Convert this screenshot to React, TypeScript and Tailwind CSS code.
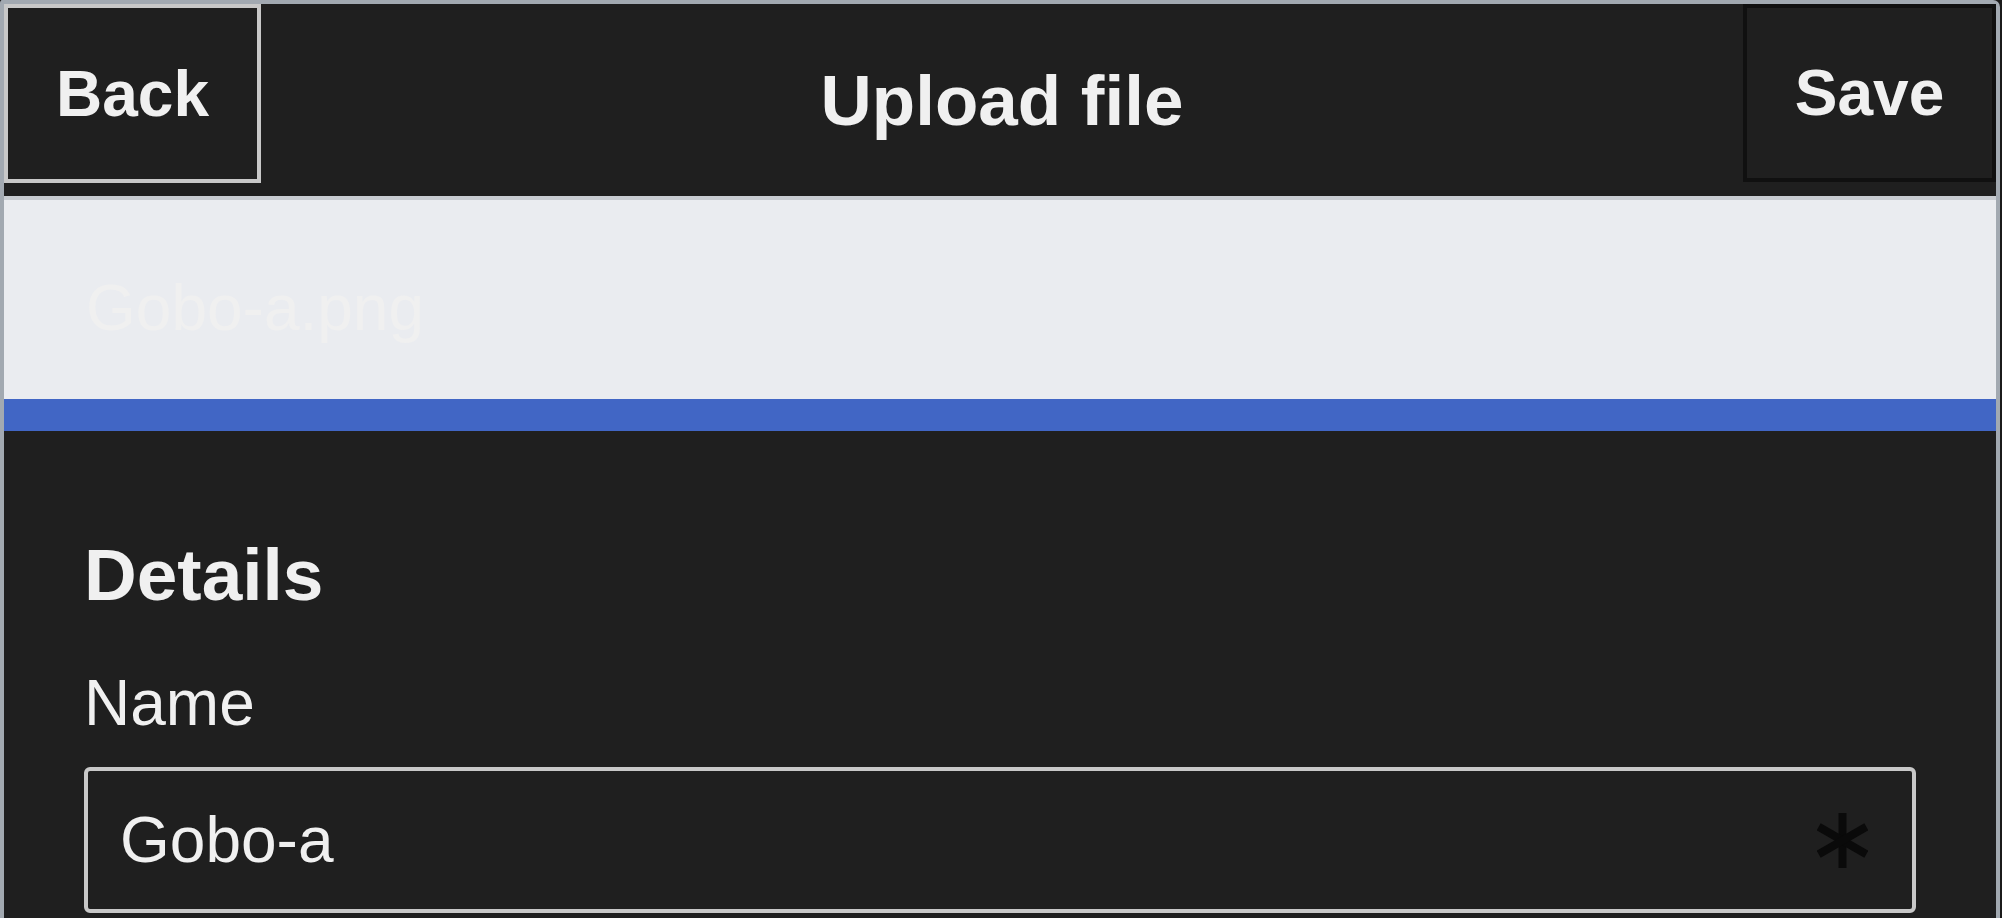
import React from "react";

function RequiredMark() {
  // six-armed asterisk shown at the right end of the field
  return (
    <svg width="51" height="55" viewBox="0 0 51 55" className="shrink-0">
      <g stroke="#0a0a0a" strokeWidth="8" strokeLinecap="butt">
        <line x1="25.5" y1="0" x2="25.5" y2="55" />
        <line x1="1.7" y1="13.75" x2="49.3" y2="41.25" />
        <line x1="1.7" y1="41.25" x2="49.3" y2="13.75" />
      </g>
    </svg>
  );
}

export default function App() {
  return (
    <div
      className="h-[918px] overflow-hidden bg-[#1b1b1b] text-[#f0f0f0]"
      style={{ fontFamily: '"Liberation Sans", Arial, sans-serif' }}
    >
      <div className="w-[2000px] h-[1000px] border-4 border-b-0 border-[#a2a9b1] rounded-tl-[3px] rounded-tr-[7px] bg-[#1f1f1f] flex flex-col">
        <header className="h-[196px] shrink-0 flex border-b-4 border-[#c8ccd1] bg-[#1f1f1f]">
          <button className="w-[257px] h-[179px] shrink-0 border-4 border-[#c8c8c8] flex items-center justify-center text-[64px] font-bold">
            Back
          </button>
          <h1 className="flex-1 self-center text-center text-[71px] font-bold pt-[2px]">
            Upload file
          </h1>
          <button className="w-[253px] h-[178px] shrink-0 border-4 border-[#101010] flex items-center justify-center text-[64px] font-bold">
            Save
          </button>
        </header>

        <div className="h-[199px] shrink-0 bg-[#eaecf0] pl-[82px] pt-[76px]">
          <div className="text-[64px] leading-none text-[#f0f0f0]">Gobo-a.png</div>
        </div>
        <div className="h-[32px] shrink-0 bg-[#4166c5]" />

        <section className="flex-1 px-[80px] pt-[107px]">
          <h2 className="text-[73px] leading-none font-bold">Details</h2>
          <label className="block mt-[60px] text-[64px] leading-none">Name</label>
          <div className="mt-[32px] h-[146px] border-4 border-[#c8c8c8] rounded-[6px] flex items-center pl-[32px] pr-[44px]">
            <span className="flex-1 text-[64px]">Gobo-a</span>
            <RequiredMark />
          </div>
        </section>
      </div>
    </div>
  );
}
